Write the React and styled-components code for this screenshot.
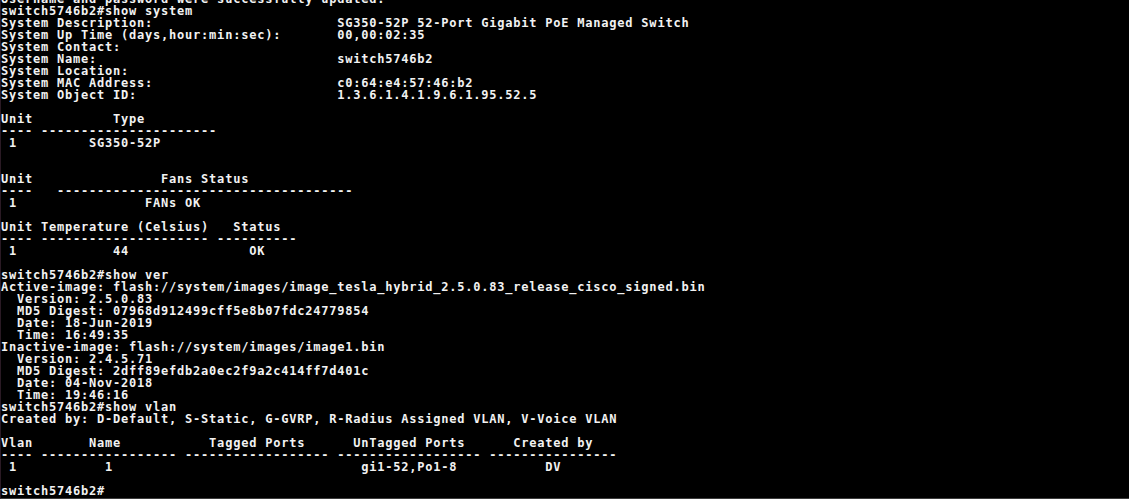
import styled, { createGlobalStyle } from "styled-components";

const GlobalStyle = createGlobalStyle`
    html, body {
        margin: 0;
        padding: 0;
        background: #000;
    }
`

const Screen = styled.div`
    width: 1129px;
    height: 499px;
    background-color: #000;
    overflow: hidden;
    box-sizing: border-box;
    border-bottom: 1px solid #3c3c3c;
    border-left: 1px solid #2a1a24;
`

const Console = styled.pre`
    margin: -7px 0 0 0;
    padding: 0;
    font-family: "DejaVu Sans Mono", "Liberation Mono", monospace;
    font-weight: bold;
    font-size: 12px;
    letter-spacing: 0.78px;
    line-height: 12px;
    color: #f2f2f2;
`

const Line = styled.div`
    height: 12px;
    white-space: pre;
`

// place each text at its column, like the fixed 8px cells of the console
const cols = (...cells) =>
    cells.reduce((out, [col, text]) => out.padEnd(col) + text, "");

const dash = (n) => "-".repeat(n);

const LINES = [
    "Username and password were successfully updated.",
    "switch5746b2#show system",
    cols([0, "System Description:"], [42, "SG350-52P 52-Port Gigabit PoE Managed Switch"]),
    cols([0, "System Up Time (days,hour:min:sec):"], [42, "00,00:02:35"]),
    "System Contact:",
    cols([0, "System Name:"], [42, "switch5746b2"]),
    "System Location:",
    cols([0, "System MAC Address:"], [42, "c0:64:e4:57:46:b2"]),
    cols([0, "System Object ID:"], [42, "1.3.6.1.4.1.9.6.1.95.52.5"]),
    "",
    cols([0, "Unit"], [14, "Type"]),
    cols([0, dash(4)], [5, dash(22)]),
    cols([1, "1"], [11, "SG350-52P"]),
    "",
    "",
    cols([0, "Unit"], [20, "Fans Status"]),
    cols([0, dash(4)], [7, dash(37)]),
    cols([1, "1"], [18, "FANs OK"]),
    "",
    cols([0, "Unit Temperature (Celsius)"], [29, "Status"]),
    cols([0, dash(4)], [5, dash(21)], [27, dash(10)]),
    cols([1, "1"], [14, "44"], [31, "OK"]),
    "",
    "switch5746b2#show ver",
    "Active-image: flash://system/images/image_tesla_hybrid_2.5.0.83_release_cisco_signed.bin",
    "  Version: 2.5.0.83",
    "  MD5 Digest: 07968d912499cff5e8b07fdc24779854",
    "  Date: 18-Jun-2019",
    "  Time: 16:49:35",
    "Inactive-image: flash://system/images/image1.bin",
    "  Version: 2.4.5.71",
    "  MD5 Digest: 2dff89efdb2a0ec2f9a2c414ff7d401c",
    "  Date: 04-Nov-2018",
    "  Time: 19:46:16",
    "switch5746b2#show vlan",
    "Created by: D-Default, S-Static, G-GVRP, R-Radius Assigned VLAN, V-Voice VLAN",
    "",
    cols([0, "Vlan"], [11, "Name"], [26, "Tagged Ports"], [44, "UnTagged Ports"], [64, "Created by"]),
    cols([0, dash(4)], [5, dash(17)], [23, dash(18)], [42, dash(18)], [61, dash(16)]),
    cols([1, "1"], [13, "1"], [45, "gi1-52,Po1-8"], [68, "DV"]),
    "",
    "switch5746b2#",
];

function App() {
    return (
        <>
            <GlobalStyle />
            <Screen>
                <Console>
                    {LINES.map((text, i) => (
                        <Line key={i}>{text}</Line>
                    ))}
                </Console>
            </Screen>
        </>
    );
}

export default App
